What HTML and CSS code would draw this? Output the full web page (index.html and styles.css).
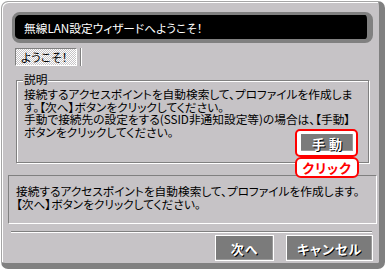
FILE: index.html
```html
<!DOCTYPE html>
<html lang="ja">
<head>
    <meta charset="UTF-8">
    <title>無線LAN設定ウィザード</title>
    <link rel="stylesheet" href="styles.css">
</head>
<body>
    <div class="window">
      <!-- title bar -->
      <div class="titleBar">
        <span>無線LAN設定ウィザードへようこそ！</span>
      </div>
      <!-- step tabs -->
      <div class="tabRow">
        <div class="tab">ようこそ！</div>
        <div class="tabSep"></div>
      </div>
      <!-- description group -->
      <div class="group">
        <span class="groupTitle">説明</span>
        <p class="groupText">接続するアクセスポイントを自動検索して、プロファイルを作成しま<br>す。【次へ】ボタンをクリックしてください。<br>手動で接続先の設定をする(SSID非通知設定等)の場合は、【手動】<br><span class="ring"><button class="btn btnManual">手動</button></span>ボタンをクリックしてください。</p>
      </div>
      <div class="callout">クリック</div>
      <!-- status text -->
      <div class="statusBox">
        接続するアクセスポイントを自動検索して、プロファイルを作成します。<br>【次へ】ボタンをクリックしてください。
      </div>
      <hr class="sep">
      <div class="footer">
        <button class="btn btnNext">次へ</button>
        <button class="btn btnCancel">キャンセル</button>
      </div>
    </div>
</body>
</html>
```

FILE: styles.css
```css
:root {
    --face: #c6c3c6;
    --shadow: #808080;
    --light: #ffffff;
    --btn-face: #7b7b7b;
    --red: #ff0000;
}
body {
    margin: 0;
    background: #fff;
    font: 11.7px "Noto Sans CJK JP", sans-serif;
    font-feature-settings: "palt";
    color: #000;
}
.window {
    position: relative;
    box-sizing: border-box;
    margin: 1px 0 0 1px;
    width: 384px;
    height: 268px;
    padding: 10px 2px 0 6px;
    background: var(--face);
    border-style: solid;
    border-width: 1px 6px 6px 1px;
    border-color: #a5a5a5 var(--shadow) var(--shadow) #a5a5a5;
    border-radius: 7px;
    box-shadow: inset 1px 1px 0 var(--light);
}
.titleBar {
    box-sizing: border-box;
    display: flex;
    align-items: center;
    margin: 0 4px;
    height: 31px;
    padding-left: 9px;
    background: #000;
    color: #fff;
    border-style: solid;
    border-color: var(--shadow);
    border-width: 3px 6px 4px 3px;
    border-radius: 8px;
    white-space: nowrap;
}
.tabRow {
    display: flex;
    margin-top: 5px;
    height: 18px;
}
.tab {
    box-sizing: border-box;
    margin-left: 7px;
    width: 62px;
    padding-left: 5px;
    line-height: 16px;
    border: 1px solid;
    border-color: var(--shadow) var(--light) var(--light) var(--shadow);
    background-color: var(--face);
    background-image: repeating-conic-gradient(#fff 0 25%, var(--face) 0 50%);
    background-size: 2px 2px;
    white-space: nowrap;
}
.tabSep {
    margin-left: 3px;
    border-left: 1px solid var(--shadow);
    border-right: 1px solid var(--light);
}
.group {
    position: relative;
    box-sizing: border-box;
    margin: 14px 0 0 8px;
    width: 353px;
    height: 83px;
    padding: 7px 0 0 7px;
    border: 1px solid var(--shadow);
    box-shadow: 1px 1px 0 var(--light), inset 1px 1px 0 var(--light);
}
.groupTitle {
    position: absolute;
    top: -8px;
    left: 6px;
    padding: 0 1px;
    line-height: 12px;
    background: var(--face);
}
.groupText {
    margin: 0;
    line-height: 12.5px;
    white-space: nowrap;
}
.ring {
    float: right;
    margin: 3px 10px 0 0;
    padding: 2px 2px 3px 3px;
    border: 2px solid var(--red);
    border-radius: 5px;
    background: #fff;
    line-height: 0;
}
.btn {
    box-sizing: border-box;
    margin: 0;
    padding: 0;
    font: bold 13px "Noto Sans CJK JP", sans-serif;
    font-feature-settings: "palt";
    color: #fff;
    text-shadow: 1px 1px 0 #000;
    background: var(--btn-face);
    border: 1px solid var(--light);
    box-shadow: inset -1px -1px 0 #9a9a9a;
}
.btnManual {
    width: 54px;
    height: 19px;
    letter-spacing: 4px;
    text-indent: 4px;
}
.callout {
    position: absolute;
    top: 155px;
    left: 293px;
    box-sizing: border-box;
    width: 64px;
    height: 21px;
    line-height: 17px;
    text-align: center;
    font-size: 13px;
    font-weight: bold;
    letter-spacing: 1px;
    color: var(--red);
    background: #fff;
    border: 2px solid var(--red);
    border-radius: 6px;
}
.statusBox {
    box-sizing: border-box;
    margin-top: 12px;
    height: 49px;
    padding: 8px 0 0 7px;
    line-height: 13px;
    white-space: nowrap;
    border: 1px solid;
    border-color: var(--shadow) var(--light) var(--light) var(--shadow);
}
.sep {
    margin: 7px 5px 0 3px;
    border: none;
    border-top: 1px solid var(--shadow);
    border-bottom: 1px solid var(--light);
}
.footer {
    display: flex;
    justify-content: flex-end;
    gap: 12px;
    margin: 2px 4px 0 0;
}
.btnNext {
    width: 59px;
    height: 26px;
    letter-spacing: 1px;
}
.btnCancel {
    width: 87px;
    height: 26px;
    letter-spacing: 1px;
}
```
